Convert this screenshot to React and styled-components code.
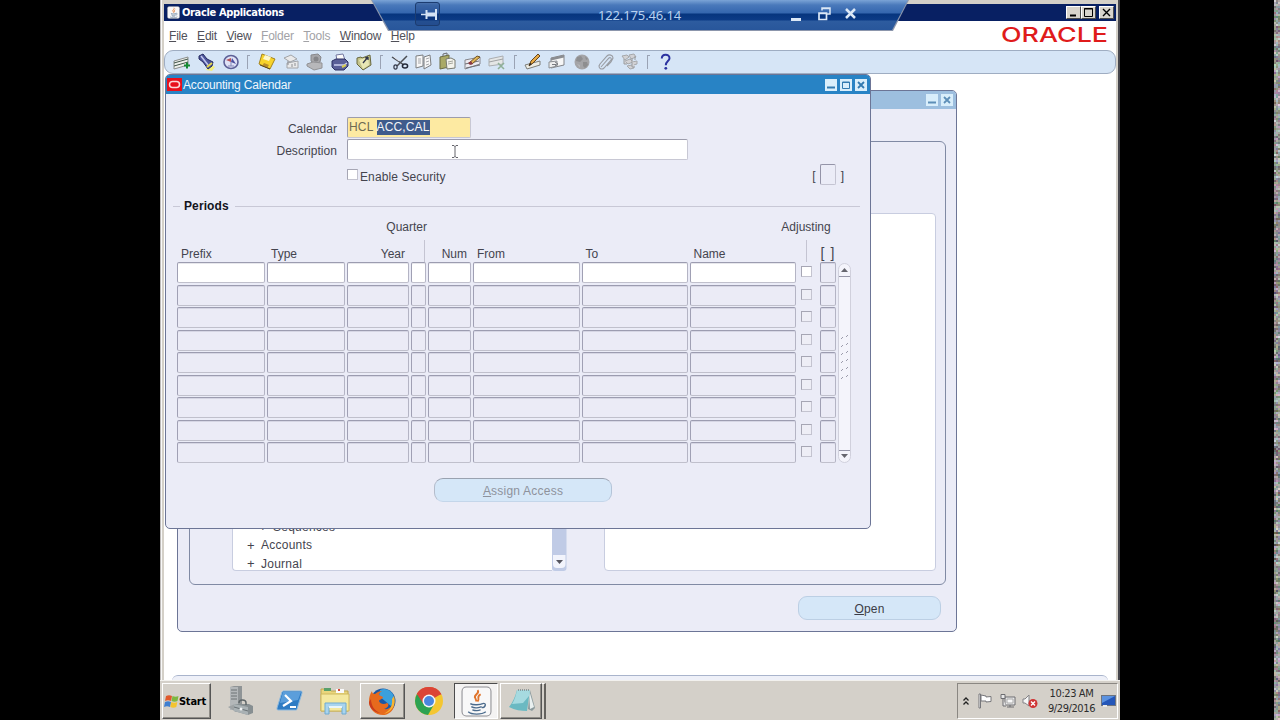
import React from "react";
import styled, { createGlobalStyle } from "styled-components";

const GlobalStyle = createGlobalStyle`
  * {
    box-sizing: border-box;
  }

  body {
    margin: 0;
    background: #000;
    overflow: hidden;
    font-family: "Liberation Sans", Arial, sans-serif;
    font-size: 12px;
    color: #44444e;
  }
`;

const menus = [
  { name: "File" },
  { name: "Edit" },
  { name: "View" },
  { name: "Folder", disabled: true },
  { name: "Tools", disabled: true },
  { name: "Window" },
  { name: "Help" }
];

const toolGroups = [
  ["new", "find", "navigator"],
  ["save", "next", "switch", "print", "close"],
  ["cut", "copy", "paste", "clear", "delete"],
  ["edit", "zoom", "translate", "attach", "folder"],
  ["help"]
];

const rows = [0, 1, 2, 3, 4, 5, 6, 7, 8];
const fields = ["prefix", "type", "year", "quarter", "num", "from", "to", "name"];

const Screen = styled.div`
  width: 1280px;
  height: 720px;
  display: flex;
  justify-content: space-between;
  background: #000;
`;

const Margin = styled.div`
  width: 160px;
  display: flex;
  justify-content: flex-end;
`;

const Desktop = styled.div`
  position: relative;
  width: 960px;
  height: 720px;
  display: flex;
  flex-direction: column;
  background: #d4d0c8;
`;

const AppFrame = styled.div`
  height: 680px;
  padding: 4px 2px 0 4px;
  display: flex;
  flex-direction: column;
  border-right: 2px solid #45454c;
  box-shadow: inset 1px 0 0 #bdbab8, inset 2px 0 0 #f8f8f8;
`;

const TitleBar = styled.div`
  height: 17px;
  padding: 0 2px 0 3px;
  display: flex;
  align-items: center;
  background: #082063;
`;

const AppTitle = styled.div`
  flex: 1;
  margin-left: 2px;
  color: #fff;
  font-family: "DejaVu Sans Condensed", "DejaVu Sans", sans-serif;
  font-stretch: condensed;
  font-size: 11px;
  font-weight: bold;
  letter-spacing: -0.35px;
`;

const FrameButton = styled.div`
  width: 15px;
  height: 13px;
  margin-left: ${props => (props.$apart ? 3 : 0)}px;
  background: #d8d4cc;
  border: 1px solid;
  border-color: #fff #4c4c4c #4c4c4c #fff;

  svg {
    display: block;
  }
`;

const MenuBar = styled.div`
  height: 29px;
  padding: 0 6px 0 5px;
  display: flex;
  align-items: center;
  background: #fff;
`;

const MenuItem = styled.div`
  margin-right: 9.6px;
  letter-spacing: -0.22px;
  color: ${props => (props.$disabled ? "#a2a2a6" : "#505058")};
`;

const Logo = styled.svg`
  margin: -1px 0 0 auto;
`;

const ToolArea = styled.div`
  height: 24px;
  background: #fff;
`;

const ToolBar = styled.div`
  height: 24px;
  padding-left: 5px;
  display: flex;
  align-items: center;
  background: #d6e5f6;
  border: 1px solid #9fadc2;
  border-radius: 9px;
`;

const Tool = styled.div`
  width: 24.4px;
  height: 22px;
  display: flex;
  align-items: center;
  justify-content: center;
`;

const Separator = styled.div`
  width: 11.2px;
  height: 14px;
  display: flex;
  justify-content: center;

  &::before {
    content: "";
    width: 2px;
    border-left: 1px solid #9aa3b4;
    border-top: 1px solid #9aa3b4;
  }
`;

const Workspace = styled.div`
  position: relative;
  flex: 1;
  background: #fff;
`;

const StatusBar = styled.div`
  height: 5px;
  padding: 0 8px;
  background: #fff;

  &::before {
    content: "";
    display: block;
    height: 5px;
    background: #eef0f8;
    border-top: 1px solid #a9b4cc;
    border-radius: 6px 6px 0 0;
  }
`;

const FormWindow = styled.div`
  position: absolute;
  left: ${props => props.$x}px;
  top: ${props => props.$y}px;
  width: ${props => props.$w}px;
  height: ${props => props.$h}px;
  display: flex;
  flex-direction: column;
  overflow: hidden;
  background: #ebecf7;
  border: 1px solid #6c7596;
  border-radius: 5px;
`;

const FormTitle = styled.div`
  height: ${props => (props.$active ? 19 : 18)}px;
  flex: none;
  padding: 0 3px 0 1px;
  display: flex;
  align-items: center;
  color: #f0f6fc;
  letter-spacing: -0.18px;
  background: ${props => (props.$active ? "#2883c5" : "#9dbfdf")};

  span {
    flex: 1;
    margin-left: 1px;
  }
`;

const FormButton = styled.svg`
  width: 12px;
  height: 12px;
  margin-left: 3px;
  background: #d9eefb;
  fill: none;
  stroke: ${props => (props.$active ? "#327ab0" : "#5e8fb8")};
`;

const CalendarForm = styled.div`
  padding-top: 23px;
`;

const FieldRow = styled.div`
  height: 21px;
  margin-bottom: 1px;
  display: flex;
  align-items: center;
`;

const Label = styled.label`
  width: 171px;
  margin: 3px 10px 0 0;
  text-align: right;
  letter-spacing: 0.05px;
`;

const TextBox = styled.div`
  position: relative;
  width: ${props => props.$w}px;
  height: 21px;
  padding: 2px 1px;
  background: ${props => (props.$required ? "#fdeaa2" : "#fff")};
  border: 1px solid;
  border-color: #9c9cac #c8c8d4 #c8c8d4 #9c9cac;
  border-radius: 2px;
  line-height: 15px;
  letter-spacing: 0.15px;
  white-space: pre;
  color: #6e6a52;

  mark {
    display: inline-block;
    height: 15px;
    color: #f2f4f8;
    background: #3f5b8c;
  }
`;

const IBeam = styled.svg`
  position: absolute;
  left: 103px;
  top: 4px;
`;

const CheckRow = styled.div`
  height: 21px;
  margin-top: 4px;
  padding: 0 26px 0 181px;
  display: flex;
  align-items: center;
`;

const CheckBox = styled.div`
  width: 11px;
  height: 11px;
  background: ${props => (props.$enabled ? "#fff" : "#eeeef6")};
  border: 1px solid;
  border-color: #a6a6b4 #c4c4d0 #c4c4d0 #a6a6b4;
`;

const CheckLabel = styled.div`
  flex: 1;
  margin: 4px 0 0 2px;
  letter-spacing: 0.1px;
`;

const Bracket = styled.span`
  margin-top: 3px;
`;

const FlexBox = styled.div`
  width: 16px;
  height: 21px;
  margin: 0 5px 0 4px;
  border: 1px solid;
  border-color: #9494a8 #c4c4d2 #c4c4d2 #9494a8;
  border-radius: 2px;
`;

const SectionTitle = styled.div`
  height: 16px;
  margin: 13px 10px 0 7px;
  display: flex;
  align-items: center;
  font-weight: bold;
  color: #14141c;
  letter-spacing: 0.1px;

  &::before,
  &::after {
    content: "";
    height: 1px;
    background: #c8c8d6;
  }

  &::before {
    width: 7px;
    margin-right: 4px;
  }

  &::after {
    flex: 1;
    margin-left: 6px;
  }
`;

const Periods = styled.div`
  margin: 5px 0 0 11px;
  display: flex;
  align-items: flex-end;
`;

const columns = "88px 78px 62px 15px 43px 106.5px 106px 106px 17px 20px";

const HeaderGrid = styled.div`
  display: grid;
  grid-template-columns: ${columns};
  grid-template-rows: 16px 27px;
  column-gap: 2px;
`;

const GroupHeader = styled.div`
  grid-row: 1;
  grid-column: ${props => props.$column};
  justify-self: ${props => props.$align};
  margin-right: ${props => (props.$align === "end" ? -1 : 0)}px;
  white-space: nowrap;
  line-height: 17px;
`;

const ColumnHeader = styled.div`
  grid-row: 2;
  padding: 12px 4px 0;
  line-height: 15px;
  text-align: ${props => (props.$right ? "right" : "left")};
`;

const Tick = styled.div`
  grid-row: 2;
  width: 1px;
  height: 22px;
  margin-top: 5px;
  justify-self: ${props => props.$align};
  margin-right: ${props => (props.$align === "end" ? 1 : 0)}px;
  background: #c4c4d2;
`;

const BracketHeader = styled.div`
  grid-row: 2;
  padding: 11px 2px 0 4px;
  display: flex;
  justify-content: space-between;
  font-size: 14px;
  line-height: 15px;
`;

const RowGrid = styled.div`
  display: grid;
  grid-template-columns: ${columns};
  grid-auto-rows: 21px;
  gap: 1.5px 2px;
  justify-items: stretch;
  align-items: start;
`;

const Cell = styled.div`
  height: 21px;
  background: ${props => (props.$enabled ? "#fff" : "#ebebf6")};
  border: 1px solid;
  border-color: #9c9cb0 #b4b4c4 #c0c0cc #a0a0b4;
  border-radius: 2px;
  box-shadow: inset 0 1px 0 rgba(120, 120, 150, 0.18);
`;

const CheckCell = styled.div`
  display: flex;
  justify-content: center;
  padding-top: 4px;
`;

const FlexCell = styled(Cell)`
  width: 16px;
  margin-left: 3px;
  background: #ebebf6;
`;

const ScrollBar = styled.svg`
  margin-left: 1px;
`;

const PillButton = styled.button`
  width: ${props => props.$w}px;
  height: 24px;
  padding: 1px 0 0;
  background: #d5e7f8;
  border: 1px solid;
  border-color: ${props => (props.$disabled ? "#9aa2b0 #b4c4d8 #c4d6ea #b4bccb" : "#bccfe4")};
  border-radius: 9px;
  font-family: inherit;
  font-size: 12px;
  letter-spacing: 0.22px;
  color: ${props => (props.$disabled ? "#8e929c" : "#3c3c46")};
`;

const AssignRow = styled.div`
  margin: 15px 0 0 268px;
`;

const Region = styled.div`
  height: 444px;
  margin: 32px 10px 0 11px;
  padding: 71px 9px 13px 42px;
  display: flex;
  border: 1px solid #808aa4;
  border-radius: 6px;
`;

const Tree = styled.div`
  width: 320px;
  display: flex;
  flex-direction: column;
  justify-content: flex-end;
  overflow: hidden;
  background: #fff;
  border: 1px solid #c8cde0;
  border-right: 0;
  border-radius: 4px 0 0 4px;
  padding-left: 14px;
`;

const TreeItem = styled.div`
  height: 18.6px;
  flex: none;
  display: flex;
  align-items: center;
  padding-left: ${props => props.$level * 12}px;
  position: relative;
  top: 3px;
  letter-spacing: 0.25px;

  span {
    width: 14px;
    font-size: 13px;
  }
`;

const TreeScroll = styled.svg`
  align-self: flex-end;
`;

const DetailPane = styled.div`
  flex: 1;
  margin-left: 37px;
  background: #fff;
  border: 1px solid #c8cde0;
  border-radius: 4px;
`;

const OpenRow = styled.div`
  margin: 11px 15px 0 0;
  display: flex;
  justify-content: flex-end;
`;

// remote desktop connection bar, floats over the title bar
const RemoteBar = styled.div`
  position: absolute;
  left: 211px;
  top: 0;
  width: 538px;
  height: 31px;
  clip-path: polygon(0 0, 100% 0, 522px 31px, 17px 31px);
  background: #8c96ac;
`;

const RemoteInner = styled.div`
  height: 30px;
  padding: 0 49px 0 44px;
  display: flex;
  align-items: center;
  clip-path: polygon(1px 0, 537px 0, 521px 30px, 18px 30px);
  background: linear-gradient(#7ba4d6 0, #4a79bb 5px, #3466ae 13px, #06357e 14px, #0c3b86 20px, #2d5c9f 21px, #28569b 30px);
`;

const PinBox = styled.div`
  width: 25px;
  height: 24px;
  margin-top: -3px;
  border: 1px solid #1c3c70;
  border-radius: 3px;
  background: rgba(10, 40, 100, 0.25);
`;

const Address = styled.div`
  flex: 1;
  padding-left: 49px;
  text-align: center;
  font-family: "Noto Sans", sans-serif;
  font-size: 13px;
  line-height: 18px;
  letter-spacing: -0.13px;
  color: #b8d2f0;
`;

const TaskBar = styled.div`
  height: 40px;
  padding: 2px 2px 0;
  display: flex;
  background: #d4d0c9;
  border-top: 1px solid #f2f1ee;
`;

const TaskButton = styled.div`
  width: ${props => props.$w}px;
  height: 36px;
  margin-left: ${props => props.$gap || 0}px;
  display: flex;
  align-items: center;
  justify-content: center;
  background: ${props => (props.$pressed ? "#f4f3f2" : "transparent")};
  border: ${props => (props.$flat ? "none" : "1px solid")};
  border-color: ${props => (props.$pressed ? "#4c4c4c #fff #fff #4c4c4c" : "#fff #555 #555 #fff")};
  box-shadow: ${props =>
    props.$flat || props.$pressed ? "none" : "inset -1px -1px 0 #8f8c86"};
`;

const StackEdge = styled.div`
  width: 4px;
  height: 36px;
  border-right: 2px solid #63615d;
  border-top: 1px solid #fff;
`;

const StartText = styled.div`
  margin: 0 3px 0 0;
  font-family: "DejaVu Sans Condensed", "DejaVu Sans", sans-serif;
  font-stretch: condensed;
  font-size: 11px;
  font-weight: bold;
  letter-spacing: -0.2px;
  color: #000;
`;

const Tray = styled.div`
  width: 161px;
  height: 36px;
  margin-left: auto;
  padding: 0 1px 0 4px;
  display: flex;
  align-items: center;
  border: 1px solid;
  border-color: #8a8782 #fff #fff #8a8782;
`;

const Clock = styled.div`
  flex: 1;
  padding-left: 4px;
  text-align: center;
  white-space: nowrap;
  font-family: "DejaVu Sans Condensed", "DejaVu Sans", sans-serif;
  font-stretch: condensed;
  font-size: 11px;
  letter-spacing: -0.4px;
  line-height: 15px;
  color: #2c2c2c;
`;

const Key = ({ text }) => (
  <>
    <u>{text[0]}</u>
    {text.slice(1)}
  </>
);

const toolDrawings = {
  new: (
    <g>
      <path d="M2 9L16 5v8L2 17z" fill="#eef0ec" stroke="#8b8f8c" />
      <path d="M2 11L16 7M2 14l14-4" stroke="#3f5548" />
      <path d="M12 13.500h6M15 10.500v6" stroke="#148a34" strokeWidth="2" />
    </g>
  ),
  find: (
    <g>
      <path d="M12 12l6 3-3 4-6-1z" fill="#f2ee7e" />
      <path d="M2 4l4-2 4 5 6 3-1 4-4 3-5-7-4-3z" fill="#4d559c" stroke="#242a60" />
      <path d="M4 4l7 9" stroke="#c2c8ee" strokeWidth="1.500" />
      <path d="M10 15l5-4" stroke="#e3d64e" strokeWidth="2" />
    </g>
  ),
  navigator: (
    <g>
      <ellipse cx="10" cy="10" rx="7" ry="6.500" fill="#dfe2f6" stroke="#5d6097" strokeWidth="1.600" />
      <path d="M5 8l5 2V6z" fill="#b5545c" />
      <path d="M10 10l5 2-4-6z" fill="#4b4f9e" />
      <path d="M10 10v4M7 14h6" stroke="#8287b8" />
    </g>
  ),
  save: (
    <g>
      <path d="M5 2l13 5-5 10L2 12z" fill="#f7d32b" stroke="#a6851e" />
      <path d="M8 3l6 2-2 4-6-2z" fill="#fff8cb" />
      <path d="M7 11l5 2-2 3-5-2z" fill="#b98e2c" />
      <path d="M3 13l10 4" stroke="#57451a" />
    </g>
  ),
  next: (
    <g stroke="#a2a4a8" fill="#e9e9ea">
      <path d="M3 6l7-3 6 4-7 3zM6 11l11-2v7H6z" />
      <path d="M7 9v4M11 12v3M14 11v3" stroke="#8d8f93" />
    </g>
  ),
  switch: (
    <g>
      <path d="M6 3l7-1 3 3-1 5-5 2-4-3z" fill="#a6a6aa" stroke="#88888c" />
      <path d="M2 12l6-2 9 1v5l-8 2-7-4z" fill="#b7b7ba" stroke="#929295" />
      <circle cx="11" cy="7" r="2.500" fill="#858589" />
    </g>
  ),
  print: (
    <g>
      <path d="M6 3l7-1 2 6H7z" fill="#fafafa" stroke="#7478a0" />
      <path d="M2 9l4-2h9l3 3v4l-4 4H5l-3-3z" fill="#5a5f98" stroke="#2c3063" />
      <path d="M4 13h10l3-2" stroke="#ccd0f0" strokeWidth="1.500" />
      <path d="M12 15l4-2" stroke="#d6cb53" strokeWidth="2" />
    </g>
  ),
  close: (
    <g>
      <path d="M3 6l4-1 1 1 8-3 1 10-8 5-6-6z" fill="#c5c48a" stroke="#68683f" />
      <path d="M5 8l9-3 1 8-6 4z" fill="#e8e7b4" />
      <path d="M9 11l5-6M14 5l-3 1M14 5v3" stroke="#30354a" strokeWidth="1.300" />
    </g>
  ),
  cut: (
    <g>
      <path d="M2 5l12 8M17 4L7 14" stroke="#4a4d54" strokeWidth="1.500" />
      <path d="M4 5l5 4" stroke="#dfe0e6" />
      <ellipse cx="15" cy="14" rx="2.600" ry="2" stroke="#222838" strokeWidth="1.500" />
      <ellipse cx="5.500" cy="15" rx="1.600" ry="2.200" stroke="#33394a" strokeWidth="1.200" />
    </g>
  ),
  copy: (
    <g fill="#f7f7f7" stroke="#7c7e80">
      <path d="M2 4l7-1v11l-7 2zM10 5l6-2 1 10-7 4z" />
      <path d="M4 7h3M4 9h3M4 11h3M12 7l3-1M12 10l3-1M12 13l3-1" stroke="#a5a7aa" />
    </g>
  ),
  paste: (
    <g>
      <path d="M2 5l9-2v12l-9 2z" fill="#a9a966" stroke="#6a6a42" />
      <path d="M5 4V2l4-1v2" stroke="#6b6c70" />
      <path d="M8 7l5-1 4 2v8l-8 1z" fill="#f3f3ec" stroke="#77796f" />
      <path d="M10 10l5-1M10 12l5-1" stroke="#a5a69e" />
    </g>
  ),
  clear: (
    <g>
      <path d="M2 8l15-3v7L2 17z" fill="#eceaf0" stroke="#85858b" />
      <path d="M2 12l14-3M3 16l14-3" stroke="#6f7077" />
      <path d="M6 11l8-7 3 1-8 7z" fill="#dfb455" stroke="#70552a" />
      <path d="M5 11l3-2 2 3-3 1z" fill="#8b3a43" />
    </g>
  ),
  delete: (
    <g>
      <path d="M2 7l14-3v8L2 14z" fill="#e4e6e6" stroke="#abaeb1" />
      <path d="M2 10l14-3" stroke="#9fa2a4" />
      <path d="M11 11l6 6M17 11l-6 6" stroke="#8fb098" strokeWidth="1.600" />
    </g>
  ),
  edit: (
    <g>
      <path d="M2 13l15-4v4L4 17z" fill="#ecece4" stroke="#7d7e78" />
      <path d="M6 14l2-5 7-7 2 2-7 7z" fill="#e6a945" stroke="#66461d" />
      <path d="M6 14l1-3 2 1z" fill="#25211c" />
    </g>
  ),
  zoom: (
    <g>
      <path d="M4 6l13-3v10L4 16z" fill="#f6f6f6" stroke="#828488" />
      <path d="M4 6l13-3v2.500L4 8.500z" fill="#8b8d91" />
      <path d="M2 10l8-1v5l-8 2z" fill="#eee" stroke="#8b8e92" />
      <path d="M5 12.500h4M8 10l3 2-3 2" stroke="#797b80" />
    </g>
  ),
  translate: (
    <g>
      <circle cx="10" cy="10" r="7.500" fill="#a4a4a7" />
      <path d="M5 5l4-1 2 3-3 3-4-1zM11 10l4 0 1 3-3 3-2-2zM13 4l3 3-2 1z" fill="#8e8e90" />
      <path d="M5 12l3 1v3z" fill="#b5b5b8" />
    </g>
  ),
  attach: (
    <path
      d="M5 15l8-9c1-1 3 0 2 2l-7 8c-2 2-5 1-5-2l1-2 7-8c2-2 6-1 6 2l-2 4-4 4"
      stroke="#999ca2"
      strokeWidth="1.100"
    />
  ),
  folder: (
    <g stroke="#a6a8ab" fill="#d2d2d5">
      <path d="M2 4l5-1 2 2-4 3zM9 3l5-1 2 3-5 2zM5 9l5-2 3 3-5 2zM12 10l5-1v3l-4 1zM7 14l5-1 2 3-4 1z" />
      <path d="M4 7v5h3M12 6v9h3M15 4v4" stroke="#9a9c9f" />
    </g>
  ),
  help: (
    <g>
      <path d="M5.800 6.500C5.800 1.500 13.500 1.500 13.500 6.200 13.500 9 9.800 9.200 9.800 13.300" stroke="#2b32a0" strokeWidth="2" />
      <circle cx="9.800" cy="16.300" r="1.400" fill="#2b32a0" />
    </g>
  )
};

const ToolIcon = ({ name }) => (
  <svg width="20" height="20" viewBox="0 0 20 20" fill="none">
    {toolDrawings[name]}
  </svg>
);

const JavaCup = ({ size }) => (
  <svg width={size} height={size} viewBox="0 0 30 30" fill="none">
    <rect x="1" y="1" width="28" height="28" rx="4" fill="#f8f8f8" stroke="#8d8d92" />
    <path d="M16 4c3 3-5 5-2 8l1 3M19 8c-5 3 0 4-3 7" stroke="#e0752c" strokeWidth="1.800" />
    <path d="M9 17c3 2 10 1 12 0M10 20c3 2 8 1 10 0M11 23c3 1 6 1 8 0M21 17c4-1 3 4-1 4" stroke="#4b6b8c" strokeWidth="1.300" />
    <path d="M7 25c3 3 13 3 17 0" stroke="#4b6b8c" strokeWidth="1.300" />
  </svg>
);

const WindowsFlag = () => (
  <svg width="15" height="15" viewBox="0 0 15 15">
    <path d="M2 2c2-1 4-1 6 0L7 7C5 6 3 6 1 7z" fill="#e0592c" />
    <path d="M8.500 2c2 1 4 1 6 0l-1 5c-2 1-4 1-6 0z" fill="#7cb841" />
    <path d="M1 8c2-1 4-1 6 0l-1 5c-2-1-4-1-6 0z" fill="#3f7fd0" />
    <path d="M7.300 8c2 1 4 1 6 0l-1 5c-2 1-4 1-6 0z" fill="#f4c430" />
  </svg>
);

const ServerManager = () => (
  <svg width="32" height="32" viewBox="2 0 32 32">
    <path d="M6 2l4-1h8v22l-4 2H6z" fill="#8f9496" />
    <path d="M6 2h8v23H6z" fill="#b3b7b9" />
    <path d="M7 5h6M7 8h6M7 11h6M7 14h6" stroke="#6d7274" />
    <path d="M4 22l7-3 8 4-7 4z" fill="#9ea3a5" />
    <path d="M10 19h15l4 2v7l-5 2-14-4z" fill="#878f92" />
    <path d="M10 19l14 3v8l-14-4z" fill="#a9b1b4" />
    <path d="M15 18c0-4 7-4 7 0v2" fill="none" stroke="#5d6568" strokeWidth="1.500" />
    <path d="M10 22l14 4" stroke="#697175" />
    <circle cx="17" cy="24" r="1.500" fill="#f1f4f5" />
  </svg>
);

const PowerShell = () => (
  <svg width="27" height="24" viewBox="0 0 27 24" fill="none">
    <path d="M7 2h18c1 0 1 1 1 2l-5 16c0 1-1 1-2 1H2c-1 0-1-1-1-2L6 3z" fill="#2e7cc4" stroke="#8bb8de" />
    <path d="M7 3h18l-3 8L4 14z" fill="#5b9edb" />
    <path d="M9 6l6 6-8 5M14 18h6" stroke="#fff" strokeWidth="2.200" />
  </svg>
);

const Explorer = () => (
  <svg width="32" height="30" viewBox="0 0 32 30">
    <path d="M2 3h8l2 2h17v20H2z" fill="#e9d67c" stroke="#c0a650" />
    <path d="M5 2h7v3H5z" fill="#58a06b" />
    <path d="M17 3h8v4h-8z" fill="#fafafa" />
    <path d="M19 4h2" stroke="#d84a3a" strokeWidth="2" />
    <path d="M2 8h28v17H2z" fill="#f4e89f" stroke="#ceb85e" />
    <path d="M6 28V17h21v11h-4v-7H10v7z" fill="#a9d4ee" stroke="#6fabd2" />
    <path d="M10 21h13" stroke="#e7f5fc" strokeWidth="2" />
  </svg>
);

const Firefox = () => (
  <svg width="29" height="29" viewBox="0 0 29 29">
    <circle cx="15" cy="14" r="12.500" fill="#1b57a4" />
    <path d="M12 3c6-3 13 1 14 8 0 4-1 6-3 8L11 9z" fill="#3aa0dc" />
    <path d="M4 4c0 2 1 3 3 3 2-2 5-3 7-3-2 1-3 3-3 4l4 2c0 2-3 2-4 4 1 3 5 4 8 2 3 1 1 5-3 6 6 1 10-4 9-11 4 9-2 17-10 17C7 28 1 22 1 14c0-4 1-7 3-10z" fill="#e66a1d" />
    <path d="M26 9c3 9-3 17-11 18 5-2 10-6 9-15z" fill="#f7b531" />
    <path d="M3 12c0 7 4 12 9 14-7-1-11-6-11-11z" fill="#c83a1c" />
  </svg>
);

const Chrome = () => (
  <svg width="30" height="30" viewBox="0 0 30 30">
    <circle cx="15" cy="15" r="14" fill="#f4c631" />
    <path d="M15 15L2.900 8A14 14 0 0 1 27.200 8z" fill="#db4437" />
    <path d="M2.900 8A14 14 0 0 0 14 29l6-10.500-5-3.500z" fill="#2da252" />
    <path d="M15 8.500h12.500A14 14 0 0 0 15 1C9 1 5 4 2.900 8L9.500 18z" fill="#db4437" />
    <circle cx="15" cy="15" r="6.500" fill="#f5f5f5" />
    <circle cx="15" cy="15" r="5" fill="#4a86e0" />
  </svg>
);

const Notepad = () => (
  <svg width="30" height="28" viewBox="0 0 30 28">
    <path d="M24 3l5 18-3 3-4-2z" fill="#8b9a9d" />
    <path d="M23 3l5 17-4 2z" fill="#e9f0f0" />
    <path d="M11 3h13l-3 21c-6 0-12-1-18-4 4-5 6-10 8-17z" fill="#6bb9c2" />
    <path d="M11 3h13l-1 6-6 7-11 1c3-5 4-9 5-14z" fill="#a6dae0" />
    <path d="M12 3h12" stroke="#7e8789" strokeWidth="1.500" strokeDasharray="1 1" />
  </svg>
);

const FlagIcon = () => (
  <svg width="16" height="16" viewBox="0 0 16 16" fill="#fff" stroke="#77777b">
    <path d="M2 1v14h1.500V1z" />
    <path d="M4 2l5 1v1l5-.5v5L9 9V8L4 8z" />
  </svg>
);

const NetworkIcon = () => (
  <svg width="16" height="16" viewBox="0 0 16 16" fill="#e8e8e8" stroke="#6c6c70">
    <path d="M5 4h10v8H5z" />
    <path d="M7 6h6v4H7z" fill="#f8f8f8" stroke="#aaa" />
    <path d="M7 14h7M10 12v2M1 1.500h4v4H1zM3 6v7h3" />
  </svg>
);

const MutedIcon = () => (
  <svg width="16" height="16" viewBox="0 0 16 16">
    <path d="M1 6h2l4-4v11l-4-3H1z" fill="#f6f6f6" stroke="#838387" />
    <circle cx="11" cy="10.500" r="4.500" fill="#cf3535" />
    <path d="M9 8.500l4 4M13 8.500l-4 4" stroke="#fff" strokeWidth="1.400" />
  </svg>
);

// decoder garbage along the right edge of the screen
const EdgeNoise = () => {
  const cells = [];
  let seed = 71;
  const next = range => {
    seed = (seed * 16807) % 2147483647;
    return seed % range;
  };
  for (let y = 0; y < 720; y += 2) {
    const base = 75 + next(50);
    for (let x = 0; x < 6; x += 2) {
      const light = base + next(60);
      const color = `rgb(${light + next(45)},${light + next(45)},${light + next(45)})`;
      cells.push(<rect key={`${x}-${y}`} x={x} y={y} width="2" height="2" fill={color} />);
    }
  }
  return (
    <svg width="6" height="720">
      {cells}
    </svg>
  );
};

const OracleMark = () => (
  <svg width="15" height="13" viewBox="0 0 15 13">
    <rect width="15" height="13" fill="#e8101c" />
    <rect x="2.500" y="3.500" width="10" height="6" rx="3" fill="none" stroke="#fbd9d9" strokeWidth="1.500" />
  </svg>
);

const Controls = ({ active }) => (
  <>
    <FormButton $active={active} viewBox="0 0 12 12">
      <path d="M2 8.500h8" strokeWidth="2" />
    </FormButton>
    {active && (
      <FormButton $active viewBox="0 0 12 12">
        <path d="M2.500 3h7v6.500h-7zM2 3.500h8" />
      </FormButton>
    )}
    <FormButton $active={active} viewBox="0 0 12 12">
      <path d="M3 3l6 6M9 3l-6 6" strokeWidth="1.800" />
    </FormButton>
  </>
);

const NavigatorWindow = () => (
  <FormWindow $x={13} $y={16} $w={780} $h={542}>
    <FormTitle>
      <span />
      <Controls />
    </FormTitle>
    <Region>
      <Tree>
        <TreeItem $level={1}>
          <span>+</span>Sequences
        </TreeItem>
        <TreeItem $level={0}>
          <span>+</span>Accounts
        </TreeItem>
        <TreeItem $level={0}>
          <span>+</span>Journal
        </TreeItem>
      </Tree>
      <TreeScroll width="15" height="358">
        <rect width="14.500" height="358" rx="3" fill="#c0cbe6" />
        <path d="M1 342h12.500v9q0 4-4 4H5q-4 0-4-4z" fill="#f2f4fc" />
        <path d="M4 347h7l-3.500 4z" fill="#55555f" />
      </TreeScroll>
      <DetailPane />
    </Region>
    <OpenRow>
      <PillButton $w={143}>
        <Key text="Open" />
      </PillButton>
    </OpenRow>
  </FormWindow>
);

const CalendarWindow = () => (
  <FormWindow $x={1} $y={0} $w={706} $h={455}>
    <FormTitle $active>
      <OracleMark />
      <span>Accounting Calendar</span>
      <Controls active />
    </FormTitle>
    <CalendarForm>
      <FieldRow>
        <Label>Calendar</Label>
        <TextBox $w={124} $required>
          HCL <mark>ACC,CAL</mark>
        </TextBox>
      </FieldRow>
      <FieldRow>
        <Label>Description</Label>
        <TextBox $w={341}>
          <IBeam width="8" height="15" fill="none" stroke="#66666c">
            <path d="M1 1.500h2l1 1 1-1h2M4 2v11M1 13.500h2l1-1 1 1h2" />
          </IBeam>
        </TextBox>
      </FieldRow>
      <CheckRow>
        <CheckBox $enabled />
        <CheckLabel>Enable Security</CheckLabel>
        <Bracket>[</Bracket>
        <FlexBox />
        <Bracket>]</Bracket>
      </CheckRow>
      <SectionTitle>Periods</SectionTitle>
      <Periods>
        <div>
          <HeaderGrid>
            <GroupHeader $column="3 / 5" $align="end">Quarter</GroupHeader>
            <GroupHeader $column="9" $align="center">Adjusting</GroupHeader>
            <ColumnHeader>Prefix</ColumnHeader>
            <ColumnHeader>Type</ColumnHeader>
            <ColumnHeader $right>Year</ColumnHeader>
            <Tick $align="end" />
            <ColumnHeader $right>Num</ColumnHeader>
            <ColumnHeader>From</ColumnHeader>
            <ColumnHeader>To</ColumnHeader>
            <ColumnHeader>Name</ColumnHeader>
            <Tick $align="center" />
            <BracketHeader>
              <span>[</span>
              <span>]</span>
            </BracketHeader>
          </HeaderGrid>
          <RowGrid>
            {rows.map(row => (
              <React.Fragment key={row}>
                {fields.map(field => (
                  <Cell key={field} $enabled={row === 0} />
                ))}
                <CheckCell>
                  <CheckBox $enabled={row === 0} />
                </CheckCell>
                <FlexCell />
              </React.Fragment>
            ))}
          </RowGrid>
        </div>
        <ScrollBar width="13" height="200" fill="none" stroke="#b8b8c8">
          <rect x="0.500" y="0.500" width="12" height="199" rx="6" fill="#f4f4fb" stroke="#d0d0dc" />
          <path d="M1 13.500h11M1 187.500h11" stroke="#9696a8" />
          <path d="M3 9h7L6.500 5zM3 191h7l-3.500 4z" fill="#66666e" stroke="none" />
          {[0, 1, 2, 3, 4, 5].map(i => (
            <path key={i} d={`M3 ${76 + i * 8}l2-2M8 ${74 + i * 8}l2-2`} stroke="#9c9cac" />
          ))}
        </ScrollBar>
      </Periods>
      <AssignRow>
        <PillButton $w={178} $disabled>
          <Key text="Assign Access" />
        </PillButton>
      </AssignRow>
    </CalendarForm>
  </FormWindow>
);

const RemoteConnection = () => (
  <RemoteBar>
    <RemoteInner>
      <PinBox>
        <svg width="23" height="22" fill="none" stroke="#d4e2f4">
          <path d="M5 11.500h6" strokeWidth="1.500" />
          <path d="M10.500 7v9M20 6v11" strokeWidth="2" />
          <path d="M11 11.500h8" strokeWidth="4" />
        </svg>
      </PinBox>
      <Address>122.175.46.14</Address>
      <svg width="70" height="22" fill="none" stroke="#dce8f6">
        <path d="M1 15.500h10" strokeWidth="3" />
        <path d="M32 6.500V4h8v6h-3M32 4.500h8" strokeWidth="1.500" />
        <path d="M29 9h7.500v6.500H29zM29 9.500h8" strokeWidth="1.700" />
        <path d="M56 5l9 9M65 5l-9 9" strokeWidth="2.500" />
      </svg>
    </RemoteInner>
  </RemoteBar>
);

export default function App() {
  return (
    <Screen>
      <GlobalStyle />
      <Margin />
      <Desktop>
        <AppFrame>
          <TitleBar>
            <JavaCup size={13} />
            <AppTitle>Oracle Applications</AppTitle>
            <FrameButton>
              <svg width="13" height="11">
                <path d="M3 8.500h6" stroke="#000" strokeWidth="2" />
              </svg>
            </FrameButton>
            <FrameButton>
              <svg width="13" height="11" fill="none" stroke="#000">
                <path d="M2.500 1.500h8v8h-8zM2 2h9" />
              </svg>
            </FrameButton>
            <FrameButton $apart>
              <svg width="13" height="11" fill="none" stroke="#000">
                <path d="M3 2l7 7M10 2L3 9" strokeWidth="1.400" />
              </svg>
            </FrameButton>
          </TitleBar>
          <MenuBar>
            {menus.map(menu => (
              <MenuItem key={menu.name} $disabled={menu.disabled}>
                <Key text={menu.name} />
              </MenuItem>
            ))}
            <Logo width="110" height="28">
              <text
                x="1"
                y="21"
                textLength="107"
                lengthAdjust="spacingAndGlyphs"
                fontFamily="Inter, sans-serif"
                fontSize="20"
                fontWeight="500"
                fill="#e01b1b"
              >
                ORACLE
              </text>
            </Logo>
          </MenuBar>
          <ToolArea>
            <ToolBar>
              {toolGroups.map((group, i) => (
                <React.Fragment key={group[0]}>
                  {i > 0 && <Separator />}
                  {group.map(name => (
                    <Tool key={name}>
                      <ToolIcon name={name} />
                    </Tool>
                  ))}
                </React.Fragment>
              ))}
            </ToolBar>
          </ToolArea>
          <Workspace>
            <NavigatorWindow />
            <CalendarWindow />
          </Workspace>
          <StatusBar />
        </AppFrame>
        <TaskBar>
          <TaskButton $w={49}>
            <WindowsFlag />
            <StartText>Start</StartText>
          </TaskButton>
          <TaskButton $w={32} $gap={15} $flat>
            <ServerManager />
          </TaskButton>
          <TaskButton $w={32} $gap={15} $flat>
            <PowerShell />
          </TaskButton>
          <TaskButton $w={32} $gap={14} $flat>
            <Explorer />
          </TaskButton>
          <TaskButton $w={45} $gap={9}>
            <Firefox />
          </TaskButton>
          <TaskButton $w={32} $gap={8} $flat>
            <Chrome />
          </TaskButton>
          <TaskButton $w={44} $gap={9} $pressed>
            <JavaCup size={31} />
          </TaskButton>
          <TaskButton $w={42} $gap={2}>
            <Notepad />
          </TaskButton>
          <StackEdge />
          <Tray>
            <svg width="8" height="10" fill="none" stroke="#222" strokeWidth="1.300">
              <path d="M1.500 4.500l2.500-2.500 2.500 2.500M1.500 8.500l2.500-2.500 2.500 2.500" />
            </svg>
            <svg width="7" height="16" />
            <FlagIcon />
            <svg width="7" height="16" />
            <NetworkIcon />
            <svg width="6" height="16" />
            <MutedIcon />
            <Clock>
              10:23 AM
              <br />
              9/29/2016
            </Clock>
            <svg width="15" height="14">
              <rect x="0.500" y="1.500" width="14" height="10" fill="#2456b8" stroke="#6d7480" />
              <path d="M1 2h13L1 9z" fill="#5b92e0" />
              <path d="M2 12h4" stroke="#e8e8e8" strokeWidth="2" />
            </svg>
          </Tray>
        </TaskBar>
        <RemoteConnection />
      </Desktop>
      <Margin>
        <EdgeNoise />
      </Margin>
    </Screen>
  );
}
